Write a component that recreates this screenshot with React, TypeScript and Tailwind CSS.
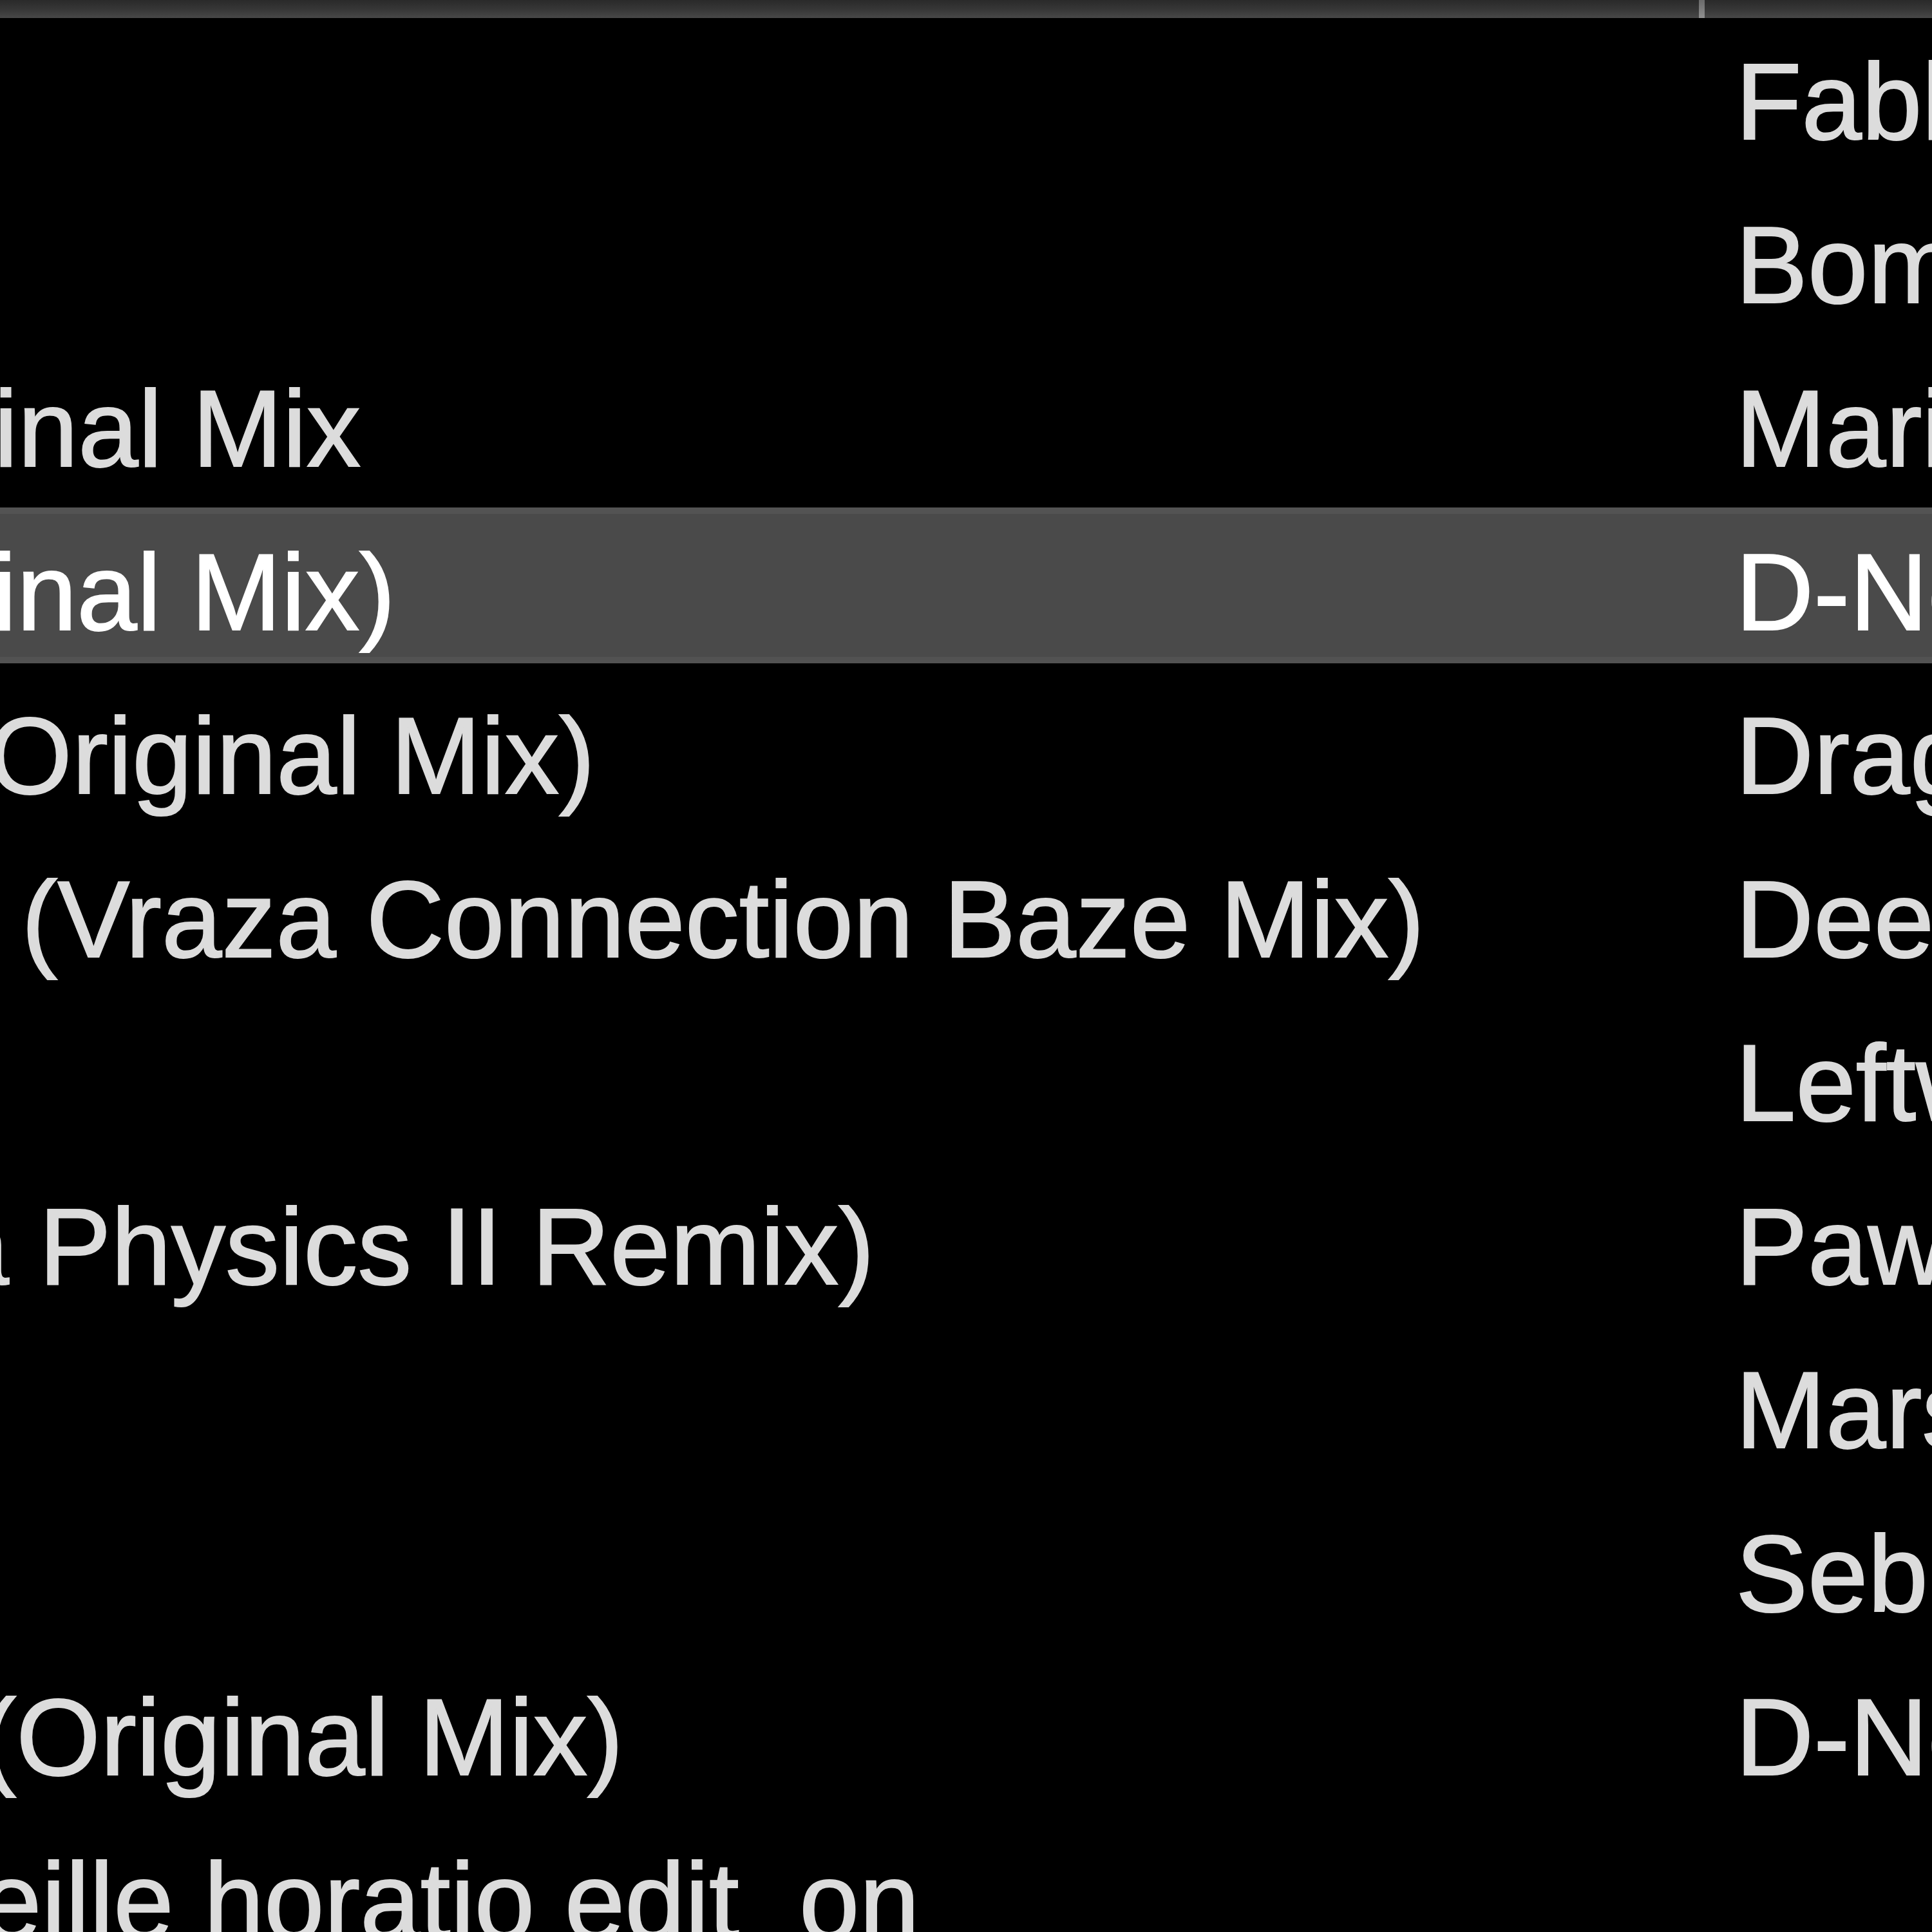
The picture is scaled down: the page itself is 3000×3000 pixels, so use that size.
import React from "react";

type Row = {
  title: string;
  end: string; // width class for right edge of visible title
  artist: string;
  selected?: boolean;
};

const rows: Row[] = [
  { title: "", end: "w-[0px]", artist: "Fable" },
  { title: "", end: "w-[0px]", artist: "Bombay" },
  { title: "Pulse - Original Mix", end: "w-[560px]", artist: "Mario" },
  { title: "Dreams (Original Mix)", end: "w-[614px]", artist: "D-Nox & Beckers", selected: true },
  { title: "Skyline (Original Mix)", end: "w-[924px]", artist: "Dragon" },
  { title: "Deep (Vraza Connection Baze Mix)", end: "w-[2212px]", artist: "Deepfunk" },
  { title: "", end: "w-[0px]", artist: "Leftwing" },
  { title: "(Nebula Physics II Remix)", end: "w-[1358px]", artist: "Pawas" },
  { title: "", end: "w-[0px]", artist: "Marsh" },
  { title: "", end: "w-[0px]", artist: "Sebastien" },
  { title: "Pulse (Original Mix)", end: "w-[968px]", artist: "D-Nox & Beckers" },
  { title: "Mireille horatio edit_on", end: "w-[1428px]", artist: "" },
];

export default function App() {
  return (
    <div className="w-[3000px] h-[3000px] overflow-hidden bg-black font-['Liberation_Sans',Arial,sans-serif]">
      {/* column header */}
      <div className="relative z-10 flex h-[28px] bg-linear-to-b from-[#2a2a2a] via-[#363636] to-[#484848]">
        <div className="w-[2638px] shrink-0" />
        <div className="w-[9px] shrink-0 bg-linear-to-b from-[#6a6a6a] to-[#909090]" />
        <div className="flex-1" />
      </div>

      {/* rows */}
      <div className="-mt-[2px] flex flex-col gap-[12px]">
        {rows.map((r, i) => (
          <div
            key={i}
            className={
              r.selected
                ? "flex h-[242px] shrink-0 pt-[22px] text-[168px] leading-[220px] text-white [-webkit-text-stroke:2px_#ffffff] bg-[#4a4a4a] shadow-[inset_0_10px_0_#535353,inset_0_-10px_0_#525252]"
                : "flex h-[242px] shrink-0 pt-[22px] text-[168px] leading-[220px] text-[#dcdcdc] [-webkit-text-stroke:2px_#dcdcdc]"
            }
          >
            <div className="flex w-[2643px] shrink-0 overflow-hidden">
              <div className={`${r.end} flex shrink-0 justify-end`}>
                <span className="whitespace-nowrap">{r.title}</span>
              </div>
            </div>
            <div className="flex-1 overflow-hidden whitespace-nowrap pl-[52px]">{r.artist}</div>
          </div>
        ))}
      </div>
    </div>
  );
}
